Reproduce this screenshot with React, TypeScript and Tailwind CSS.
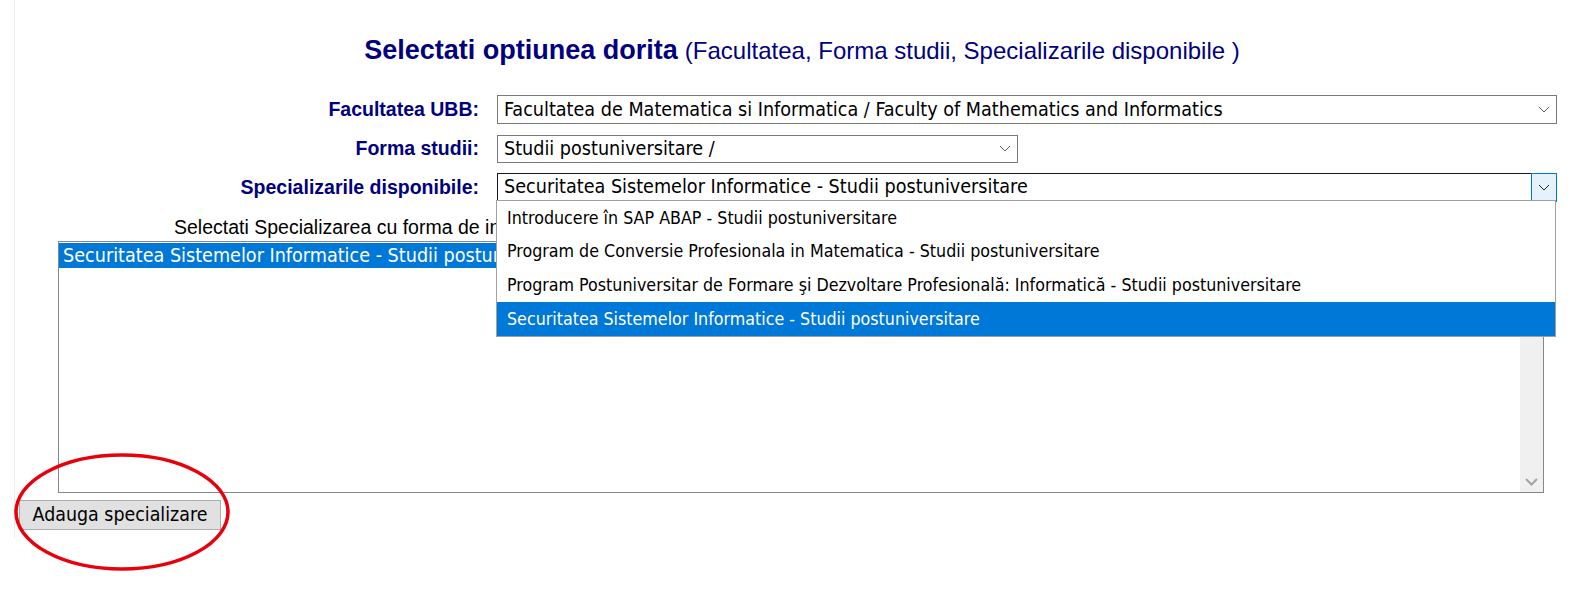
import React from 'react';

// Pagina de selectie specializare (UBB) - select deschis + lista + buton marcat

const OPTIONS = [
  'Introducere în SAP ABAP - Studii postuniversitare',
  'Program de Conversie Profesionala in Matematica - Studii postuniversitare',
  'Program Postuniversitar de Formare şi Dezvoltare Profesională: Informatică - Studii postuniversitare',
  'Securitatea Sistemelor Informatice - Studii postuniversitare',
];

const Chevron: React.FC<{ className?: string }> = ({ className }) => (
  <svg width="12" height="7" viewBox="0 0 12 7" className={className}>
    <polyline points="1,1 6,6 11,1" fill="none" stroke="currentColor" strokeWidth="1" />
  </svg>
);

const FakeSelect: React.FC<{ value: string; width: string; focused?: boolean; height: string }> = ({
  value,
  width,
  focused,
  height,
}) => (
  <div
    className={
      'relative flex items-center bg-white text-black ' +
      width +
      ' ' +
      height +
      (focused ? ' border border-[#1a1a1a] border-b-[#a0a0a0]' : ' border border-[#7a7a7a]')
    }
  >
    <span className="pl-[6px] text-[19.6px] leading-none whitespace-nowrap font-['DejaVu_Sans_Condensed','DejaVu_Sans',sans-serif]">
      {value}
    </span>
    {focused ? (
      <div className="absolute right-[-1px] top-[-1px] bottom-[-1px] w-[26px] flex items-center justify-center bg-[#e5f1fb] border border-[#0078d7]">
        <Chevron className="text-[#222]" />
      </div>
    ) : (
      <div className="absolute right-[6px] top-0 bottom-0 flex items-center">
        <Chevron className="text-[#606060]" />
      </div>
    )}
  </div>
);

export default function App() {
  return (
    <div className="relative w-full h-[599px] bg-white overflow-hidden font-['Liberation_Sans',Arial,sans-serif]">
      <div className="ml-[14px] border-l border-[#ececec] h-[538px] flex flex-col">
        {/* Titlu */}
        <div className="pt-[35px] pl-[18px] flex justify-center items-baseline text-[#000080] leading-[31px] whitespace-nowrap">
          <span className="text-[27px] font-bold">Selectati optiunea dorita</span>
          <span className="text-[24px] ml-[7px]">(Facultatea, Forma studii, Specializarile disponibile )</span>
        </div>

        {/* Formular */}
        <div className="mt-[29px] flex flex-col">
          <div className="flex items-center gap-[18px]">
            <div className="w-[464px] text-right text-[19.5px] font-bold text-[#000080]">Facultatea UBB:</div>
            <FakeSelect
              value="Facultatea de Matematica si Informatica / Faculty of Mathematics and Informatics"
              width="w-[1060px]"
              height="h-[29px]"
            />
          </div>
          <div className="mt-[10px] flex items-center gap-[18px]">
            <div className="w-[464px] text-right text-[19.5px] font-bold text-[#000080]">Forma studii:</div>
            <FakeSelect value="Studii postuniversitare /" width="w-[521px]" height="h-[28px]" />
          </div>
          <div className="mt-[9px] flex items-center gap-[18px]">
            <div className="w-[464px] text-right text-[19.5px] font-bold text-[#000080]">Specializarile disponibile:</div>
            <FakeSelect
              value="Securitatea Sistemelor Informatice - Studii postuniversitare"
              width="w-[1060px]"
              height="h-[29px]"
              focused
            />
          </div>
        </div>

        <div className="mt-[12px] ml-[159px] w-[322px] overflow-hidden h-[27px] leading-[27px] text-[19.5px] text-black whitespace-nowrap">
          Selectati Specializarea cu forma de invatamant dorita:
        </div>

        {/* Lista specializari alese */}
        <div className="ml-[43px] w-[1486px] h-[252px] border border-[#828790] bg-white flex">
          <div className="flex-1 pt-[1px]">
            <div className="h-[25px] bg-[#0078d7] text-white flex items-center pl-[4px] text-[19.6px] whitespace-nowrap font-['DejaVu_Sans_Condensed','DejaVu_Sans',sans-serif]">
              Securitatea Sistemelor Informatice - Studii postuniversitare
            </div>
          </div>
          <div className="w-[23px] bg-[#f0f0f0] flex flex-col justify-end items-center pb-[6px]">
            <svg width="13" height="8" viewBox="0 0 13 8">
              <polyline points="1,1 6.5,6.5 12,1" fill="none" stroke="#a3a3a3" strokeWidth="2" />
            </svg>
          </div>
        </div>

        <div className="mt-[7px] ml-[4px]">
          <button className="w-[202px] h-[30px] bg-[#e1e1e1] border border-[#adadad] text-black text-[19.4px] leading-none font-['DejaVu_Sans_Condensed','DejaVu_Sans',sans-serif]">
            Adauga specializare
          </button>
        </div>
      </div>

      {/* Lista derulanta deschisa */}
      <div className="absolute left-[496px] top-[200px] w-[1060px] h-[137px] bg-white border border-[#a0a0a0] flex flex-col">
        {OPTIONS.map((o, i) => (
          <div
            key={o}
            className={
              'h-[34px] flex items-center pl-[10px] text-[17.7px] whitespace-nowrap font-[\'DejaVu_Sans_Condensed\',\'DejaVu_Sans\',sans-serif] ' +
              (i === OPTIONS.length - 1 ? 'bg-[#0078d7] text-white' : 'text-black')
            }
          >
            {o}
          </div>
        ))}
      </div>

      {/* Marcaj rosu */}
      <svg className="absolute left-0 top-[445px]" width="240" height="135" viewBox="0 0 240 135">
        <ellipse cx="122" cy="67" rx="106" ry="57" fill="none" stroke="#e8000b" strokeWidth="3.5" style={{ filter: 'blur(0.6px)' }} />
      </svg>
    </div>
  );
}
